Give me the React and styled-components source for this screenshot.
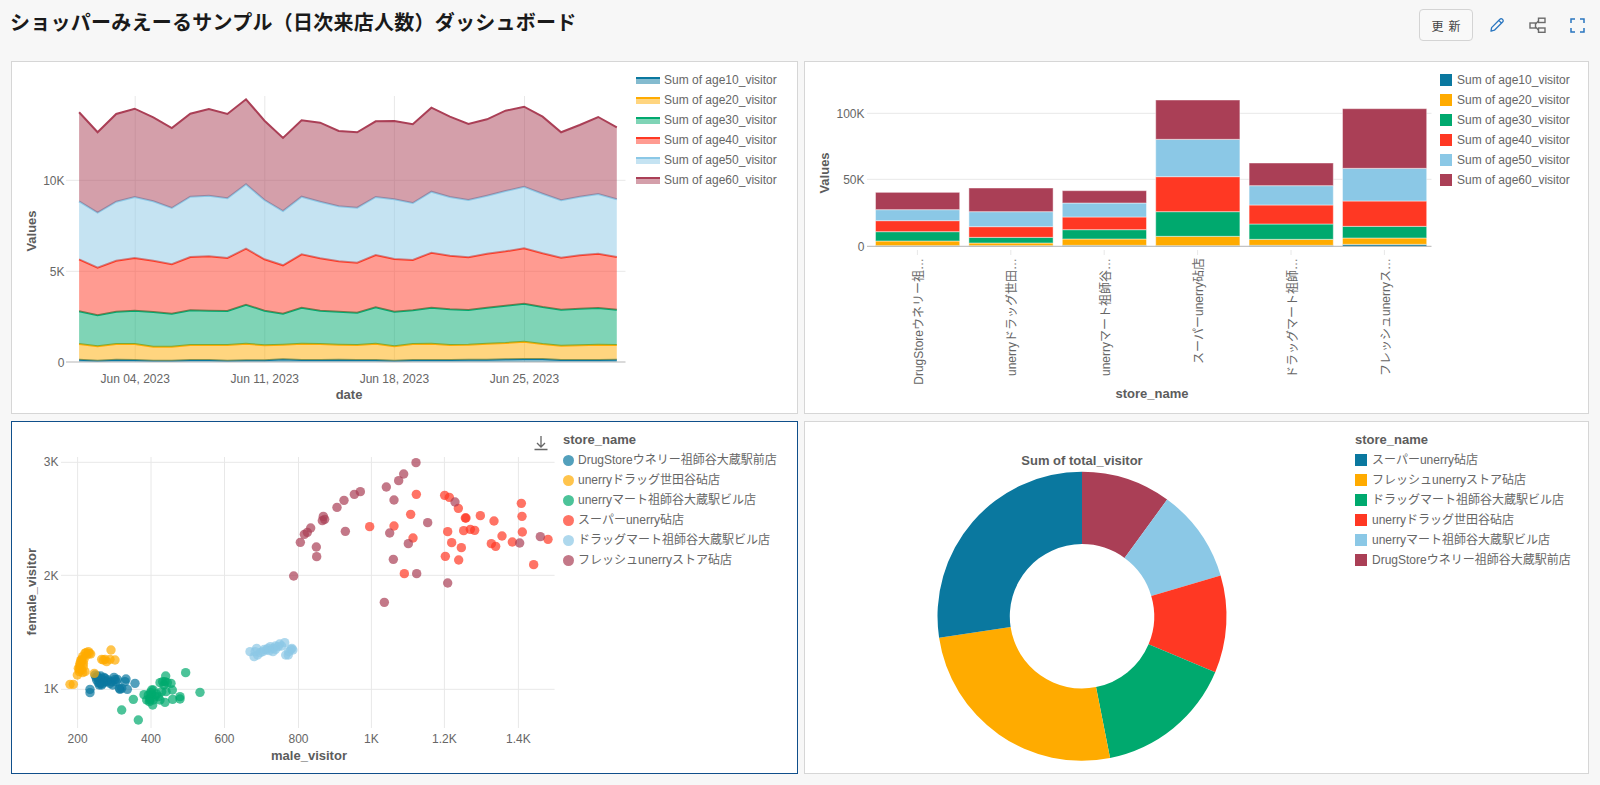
import React from 'react';
import styled, { createGlobalStyle } from 'styled-components';

const FONT = '"Liberation Sans", "Noto Sans CJK JP", sans-serif';
const COLORS = {
  age10: '#0a789f',
  age20: '#ffab00',
  age30: '#00a96e',
  age40: '#ff3823',
  age50: '#8bc8e6',
  age60: '#aa3f56',
};
const SERIES = ['age10', 'age20', 'age30', 'age40', 'age50', 'age60'];

// tops of the stacked layers, y px * 3 as read off the chart
const AREA_TOPS = {
  age10: [1079,1082,1079,1080,1082,1082,1080,1080,1082,1081,1081,1078,1080,1080,1079,1080,1080,1082,1080,1080,1080,1079,1079,1078,1077,1077,1080,1080,1080,1079],
  age20: [1032,1039,1032,1032,1040,1040,1035,1035,1035,1031,1036,1034,1031,1032,1034,1035,1031,1039,1032,1031,1035,1034,1031,1029,1025,1032,1037,1036,1034,1035],
  age30: [934,946,935,932,936,941,931,932,933,914,932,941,923,932,935,938,922,935,931,923,928,930,923,917,911,921,929,926,924,929],
  age40: [778,803,782,774,782,793,771,769,774,746,778,796,763,775,784,788,765,777,780,758,767,772,761,754,745,760,773,766,761,771],
  age50: [604,638,605,591,604,624,590,587,595,553,600,633,590,605,619,623,591,598,609,575,591,600,587,573,560,581,601,590,582,598],
  age60: [337,397,342,326,352,384,341,327,342,298,362,414,361,368,393,397,364,363,373,323,350,372,358,332,320,350,397,375,351,382],
};

const BAR_TOPS = [
  [737, 723, 695, 662, 629, 577],
  [737, 729, 712, 680, 635, 564],
  [736, 717, 689, 651, 609, 572],
  [737, 709, 635, 530, 418, 300],
  [736, 718, 672, 615, 557, 489],
  [733, 714, 679, 603, 505, 326],
];

const BAR_LABELS = [
  'DrugStoreウネリー祖…',
  'unerryドラッグ世田…',
  'unerryマート祖師谷…',
  'スーパーunerry砧店',
  'ドラッグマート祖師…',
  'フレッシュunerryス…',
];

const zoomA = (list) => list.map(([x, y]) => [40 + x / 3, 600 + y / 3]);
const zoomB = (list) => list.map(([x, y]) => [280 + x / 3, 430 + y / 3]);
const zoomC = (list) => list.map(([x, y]) => [x / 1.96, 400 + y / 3]);

const POINTS = [
  {
    color: COLORS.age10,
    items: zoomA([[165,225],[175,235],[185,245],[180,250],[195,235],[200,245],[185,255],[170,240],[195,245],[218,255],[225,238],[232,238],[240,268],[258,237],[262,268],[285,250],[150,268],[150,278],[215,245],[180,235],[190,240],[175,248],[172,228],[182,228],[192,232],[205,240],[210,250],[222,232],[228,245],[178,255],[188,250],[168,232],[238,265],[255,245],[245,265]]),
  },
  {
    color: COLORS.age20,
    items: zoomA([[145,155],[135,160],[128,170],[125,178],[120,190],[115,205],[120,200],[125,210],[112,225],[135,215],[120,195],[130,190],[140,165],[152,162],[185,178],[195,178],[200,185],[210,178],[225,180],[213,150],[163,220],[90,253],[100,253],[125,185],[118,215],[130,200],[138,158],[122,182],[132,178],[118,208],[128,218],[148,160],[190,180]]),
  },
  {
    color: COLORS.age30,
    items: zoomA([[245,330],[295,360],[280,298],[312,284],[320,300],[325,285],[335,270],[340,270],[338,315],[330,300],[345,290],[360,248],[377,228],[375,245],[393,250],[397,270],[378,275],[365,275],[398,298],[375,307],[420,290],[420,297],[437,218],[480,277],[355,290],[330,295],[372,255],[335,285],[340,300],[328,305],[350,282],[368,245],[382,248],[360,300],[332,278]]),
  },
  {
    color: COLORS.age40,
    items: zoomB([[269,290],[342,288],[399,324],[392,253],[409,193],[373,431],[494,196],[508,202],[535,235],[556,264],[558,264],[601,257],[642,273],[503,305],[551,302],[571,298],[584,301],[515,338],[544,353],[496,379],[536,390],[634,341],[647,349],[666,318],[697,336],[724,220],[726,259],[727,306],[761,404],[804,328]]),
  },
  {
    color: COLORS.age50,
    items: zoomC([[490,755],[498,770],[503,745],[505,765],[515,755],[522,750],[530,740],[535,755],[540,738],[548,732],[558,728],[565,765],[570,748],[560,765],[572,745],[535,745],[525,745],[510,758],[545,740],[500,755],[528,752],[552,738],[566,755],[574,750],[518,748],[540,748]]),
  },
  {
    color: COLORS.age60,
    items: zoomB([[41,438],[61,337],[73,313],[82,307],[92,294],[109,351],[110,380],[127,272],[134,268],[130,259],[171,232],[192,211],[196,304],[223,193],[241,185],[319,171],[356,152],[371,132],[408,98],[342,210],[329,309],[385,341],[340,388],[410,431],[313,517],[443,278],[503,459],[525,216],[719,339],[781,320]]),
  },
];

const SLICES = [
  { from: 0, to: 36.1, color: COLORS.age60 },
  { from: 36.1, to: 73.6, color: COLORS.age50 },
  { from: 73.6, to: 112.8, color: COLORS.age40 },
  { from: 112.8, to: 168.8, color: COLORS.age30 },
  { from: 168.8, to: 261.5, color: COLORS.age20 },
  { from: 261.5, to: 360, color: COLORS.age10 },
];

const areaX = (i) => 79.1 + 18.54 * i;

const arcPath = (cx, cy, R, r, from, to) => {
  const pt = (rad, deg) => {
    const a = (deg * Math.PI) / 180;
    return `${(cx + rad * Math.sin(a)).toFixed(2)} ${(cy - rad * Math.cos(a)).toFixed(2)}`;
  };
  const large = to - from > 180 ? 1 : 0;
  return `M${pt(R, from)} A${R} ${R} 0 ${large} 1 ${pt(R, to)} L${pt(r, to)} A${r} ${r} 0 ${large} 0 ${pt(r, from)} Z`;
};

const AreaChart = () => {
  const line = (key) => AREA_TOPS[key].map((y, i) => `${areaX(i).toFixed(1)},${(y / 3).toFixed(1)}`);
  return (
    <ChartSvg width="624" height="351" viewBox="12 62 624 351">
      {[135.2, 264.8, 394.4, 524.5].map((x) => <GridLine key={x} x1={x} x2={x} y1="96" y2="362" />)}
      {[180.3, 271.3].map((y) => <GridLine key={y} x1="66" x2="625.5" y1={y} y2={y} />)}
      {SERIES.map((key, n) => {
        const below = n === 0
          ? [`${areaX(29)},362`, `${areaX(0)},362`]
          : line(SERIES[n - 1]).reverse();
        return (
          <g key={key}>
            <polygon points={[...line(key), ...below].join(' ')} fill={COLORS[key]} fillOpacity="0.5" />
            <polyline points={line(key).join(' ')} fill="none" stroke={COLORS[key]} strokeWidth="2" />
          </g>
        );
      })}
      <AxisLine x1="66" x2="625.5" y1="362" y2="362" />
      {[['10K', 181], ['5K', 272], ['0', 362.7]].map(([t, y]) => <Tick key={t} x="64.5" y={y} $anchor="end">{t}</Tick>)}
      {[['Jun 04, 2023', 135.2], ['Jun 11, 2023', 264.8], ['Jun 18, 2023', 394.4], ['Jun 25, 2023', 524.5]].map(([t, x]) => (
        <Tick key={t} x={x} y="378.7" $anchor="middle">{t}</Tick>
      ))}
      <AxisTitle x="349" y="394.7">date</AxisTitle>
      <AxisTitle x="31.6" y="231" transform="rotate(-90 31.6 231)">Values</AxisTitle>
    </ChartSvg>
  );
};

const BarChart = () => (
  <ChartSvg width="635" height="351" viewBox="805 62 635 351">
    {[113.3, 179.3].map((y) => <GridLine key={y} x1="867" x2="1431.5" y1={y} y2={y} />)}
    {BAR_TOPS.map((tops, b) => {
      const x = 875.5 + b * 93.4;
      return tops.map((top, s) => {
        const bottom = s === 0 ? 739 : tops[s - 1];
        return (
          <BarRect key={`${b}-${s}`} x={x} y={top / 3} width="84.2" height={(bottom - top) / 3} fill={COLORS[SERIES[s]]} />
        );
      });
    })}
    <AxisLine x1="867" x2="1431.5" y1="246.3" y2="246.3" />
    {[['100K', 114], ['50K', 180], ['0', 247]].map(([t, y]) => <Tick key={t} x="864.5" y={y} $anchor="end">{t}</Tick>)}
    {BAR_LABELS.map((t, b) => {
      const x = 917.4 + b * 93.4;
      return (
        <g key={t}>
          <GridLine x1={x} x2={x} y1="250" y2="255" />
          <Tick x={x + 1.5} y="258" $anchor="end" transform={`rotate(-90 ${x + 1.5} 258)`}>{t}</Tick>
        </g>
      );
    })}
    <AxisTitle x="1152" y="393.7">store_name</AxisTitle>
    <AxisTitle x="824.5" y="173" transform="rotate(-90 824.5 173)">Values</AxisTitle>
  </ChartSvg>
);

const ScatterChart = () => (
  <ChartSvg width="551" height="351" viewBox="12 422 551 351">
    {[77.6, 151, 224.5, 298.5, 371.4, 444.4, 518.4].map((x) => <GridLine key={x} x1={x} x2={x} y1="457" y2="728" />)}
    {[462.3, 575.3, 689.3].map((y) => <GridLine key={y} x1="61" x2="554.6" y1={y} y2={y} />)}
    {POINTS.map(({ color, items }) => items.map(([x, y], i) => (
      <circle key={`${color}-${i}`} cx={x} cy={y} r="4.7" fill={color} fillOpacity="0.7" />
    )))}
    {[['3K', 462.3], ['2K', 576], ['1K', 689.3]].map(([t, y]) => <Tick key={t} x="58.5" y={y} $anchor="end">{t}</Tick>)}
    {[['200', 77.6], ['400', 151], ['600', 224.5], ['800', 298.5], ['1K', 371.4], ['1.2K', 444.4], ['1.4K', 518.4]].map(([t, x]) => (
      <Tick key={t} x={x} y="738.7" $anchor="middle">{t}</Tick>
    ))}
    <AxisTitle x="309" y="755">male_visitor</AxisTitle>
    <AxisTitle x="32" y="591.7" transform="rotate(-90 32 591.7)">female_visitor</AxisTitle>
    <path d="M541 436v11M537 443l4 4 4-4M534.5 449.5h13" fill="none" stroke="#666" strokeWidth="1.3" />
  </ChartSvg>
);

const PieChart = () => (
  <ChartSvg width="550" height="351" viewBox="805 422 550 351">
    {SLICES.map((s) => <path key={s.color} d={arcPath(1082, 616.3, 144.5, 72.2, s.from, s.to)} fill={s.color} />)}
    <AxisTitle x="1082" y="460.7">Sum of total_visitor</AxisTitle>
  </ChartSvg>
);

const Legend = ({ title, items, Swatch, gap }) => (
  <LegendBox>
    {title && <LegendTitle>{title}</LegendTitle>}
    {items.map(([label, color]) => (
      <LegendRow key={label} $gap={gap}>
        <Swatch $color={color} />
        <LegendText>{label}</LegendText>
      </LegendRow>
    ))}
  </LegendBox>
);

const AGE_ITEMS = SERIES.map((key) => [`Sum of ${key}_visitor`, COLORS[key]]);

const SCATTER_ITEMS = [
  ['DrugStoreウネリー祖師谷大蔵駅前店', COLORS.age10],
  ['unerryドラッグ世田谷砧店', COLORS.age20],
  ['unerryマート祖師谷大蔵駅ビル店', COLORS.age30],
  ['スーパーunerry砧店', COLORS.age40],
  ['ドラッグマート祖師谷大蔵駅ビル店', COLORS.age50],
  ['フレッシュunerryストア砧店', COLORS.age60],
];

const PIE_ITEMS = [
  ['スーパーunerry砧店', COLORS.age10],
  ['フレッシュunerryストア砧店', COLORS.age20],
  ['ドラッグマート祖師谷大蔵駅ビル店', COLORS.age30],
  ['unerryドラッグ世田谷砧店', COLORS.age40],
  ['unerryマート祖師谷大蔵駅ビル店', COLORS.age50],
  ['DrugStoreウネリー祖師谷大蔵駅前店', COLORS.age60],
];

const App = () => (
  <>
    <GlobalStyle />
    <Page>
      <Header>
        <Title>ショッパーみえーるサンプル（日次来店人数）ダッシュボード</Title>
        <Actions>
          <RefreshButton type="button">更 新</RefreshButton>
          <IconSlot>
            <svg width="16" height="16" viewBox="0 0 16 16" fill="none" stroke="#2a76c0" strokeWidth="1.3" strokeLinejoin="round">
              <path d="M2 14.2l.6-3.6 8.3-8.3a1.6 1.6 0 0 1 2.5 0l.2.2a1.6 1.6 0 0 1 0 2.5l-8.2 8.2zM9.8 3.4l2.8 2.8" />
            </svg>
          </IconSlot>
          <IconSlot>
            <svg width="17" height="17" viewBox="0 0 17 17" fill="none" stroke="#6b6b6b" strokeWidth="1.4">
              <rect x="1" y="6" width="5.5" height="5" />
              <rect x="9.5" y="1.2" width="6.5" height="4.3" />
              <rect x="9.5" y="11" width="6.5" height="4.3" />
              <path d="M6.5 7l3-3M6.5 10l3 3" />
            </svg>
          </IconSlot>
          <IconSlot>
            <svg width="15" height="15" viewBox="0 0 15 15" fill="none" stroke="#2a76c0" strokeWidth="1.5">
              <path d="M1 5V1h4M10 1h4v4M14 10v4h-4M5 14H1v-4" />
            </svg>
          </IconSlot>
        </Actions>
      </Header>
      <Grid>
        <Panel>
          <AreaChart />
          <Legend items={AGE_ITEMS} Swatch={LineSwatch} gap={4} />
        </Panel>
        <Panel>
          <BarChart />
          <Legend items={AGE_ITEMS} Swatch={SquareSwatch} gap={5} />
        </Panel>
        <Panel $active>
          <ScatterChart />
          <Legend title="store_name" items={SCATTER_ITEMS} Swatch={DotSwatch} gap={4} />
        </Panel>
        <Panel>
          <PieChart />
          <Legend title="store_name" items={PIE_ITEMS} Swatch={SquareSwatch} gap={5} />
        </Panel>
      </Grid>
    </Page>
  </>
);

const GlobalStyle = createGlobalStyle`
  body {
    margin: 0;
    background: #f7f7f7;
    font-family: ${FONT};
  }
`;

const Page = styled.div`
  width: 1600px;
  height: 785px;
  overflow: hidden;
  box-sizing: border-box;
  padding-left: 11px;
`;

const Header = styled.header`
  display: flex;
  justify-content: space-between;
  align-items: flex-start;
  height: 61px;
  box-sizing: border-box;
  padding: 9px 3px 0 0;
`;

const Title = styled.h1`
  margin: 0 0 0 -1px;
  font-size: 20px;
  line-height: 28px;
  font-weight: 700;
  letter-spacing: 0.25px;
  color: #1a1a1a;
`;

const Actions = styled.div`
  display: flex;
  align-items: center;
`;

const RefreshButton = styled.button`
  width: 54px;
  height: 32px;
  margin-right: 4px;
  padding: 0;
  background: #f9f9f9;
  border: 1px solid #d4d4d4;
  border-radius: 4px;
  font-family: ${FONT};
  font-size: 12px;
  word-spacing: 1.5px;
  color: #444;
`;

const IconSlot = styled.span`
  display: flex;
  align-items: center;
  justify-content: center;
  width: 40px;
  height: 32px;
`;

const Grid = styled.div`
  display: grid;
  grid-template-columns: 787px 785px;
  grid-template-rows: 353px 353px;
  column-gap: 6px;
  row-gap: 7px;
`;

const Panel = styled.section`
  display: flex;
  align-items: flex-start;
  box-sizing: border-box;
  background: #fff;
  border: 1px solid ${(p) => (p.$active ? '#104f8b' : '#d6d6d6')};
  overflow: hidden;
`;

const ChartSvg = styled.svg`
  display: block;
  flex: none;
`;

const GridLine = styled.line`
  stroke: #e8e8e8;
  stroke-width: 1;
`;

const AxisLine = styled.line`
  stroke: #b5b5b5;
  stroke-width: 1;
`;

const BarRect = styled.rect`
  stroke: #fff;
  stroke-opacity: 0.45;
  stroke-width: 1;
`;

const Tick = styled.text`
  font-family: ${FONT};
  font-size: 12px;
  fill: #666;
  text-anchor: ${(p) => p.$anchor};
  dominant-baseline: central;
`;

const AxisTitle = styled.text`
  font-family: ${FONT};
  font-size: 13px;
  font-weight: 700;
  fill: #5c5c5c;
  text-anchor: middle;
  dominant-baseline: central;
`;

const LegendBox = styled.div`
  display: flex;
  flex-direction: column;
  padding-top: 8px;
`;

const LegendTitle = styled.div`
  height: 20px;
  line-height: 20px;
  font-size: 13px;
  font-weight: 700;
  color: #5c5c5c;
  white-space: nowrap;
`;

const LegendRow = styled.div`
  display: flex;
  align-items: center;
  gap: ${(p) => p.$gap}px;
  height: 20px;
`;

const LegendText = styled.span`
  font-size: 12px;
  line-height: 14px;
  color: #666;
  white-space: nowrap;
`;

const LineSwatch = styled.span`
  flex: none;
  box-sizing: border-box;
  width: 24px;
  height: 7px;
  background: ${(p) => p.$color}80;
  border-top: 2px solid ${(p) => p.$color};
`;

const SquareSwatch = styled.span`
  flex: none;
  width: 12px;
  height: 12px;
  background: ${(p) => p.$color};
`;

const DotSwatch = styled.span`
  flex: none;
  width: 11px;
  height: 11px;
  border-radius: 50%;
  background: ${(p) => p.$color}b3;
`;

export default App;
